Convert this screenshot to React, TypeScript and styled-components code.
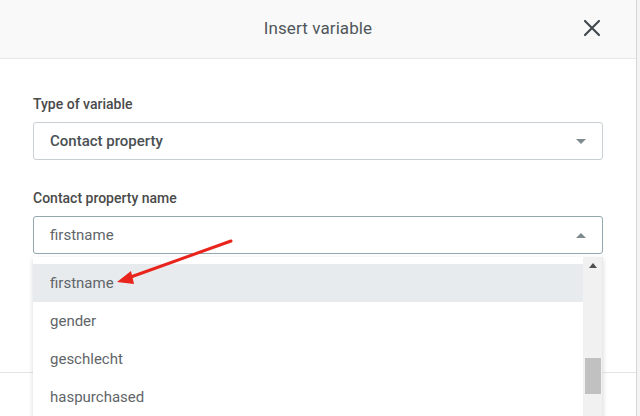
import React from "react";
import styled, { createGlobalStyle } from "styled-components";

const Global = createGlobalStyle`
  html, body { margin: 0; padding: 0; background: #fff; }
  body { font-family: Roboto, "Noto Sans", sans-serif; overflow: hidden; }
  * { box-sizing: border-box; }
`;

const Page = styled.div`
  position: relative;
  width: 640px;
  height: 416px;
  overflow: hidden;
  background: #f4f4f4;
`;

const Modal = styled.div`
  width: 637px;
  height: 416px;
  background: #fff;
  border-right: 1px solid #d6d6d6;
  display: flex;
  flex-direction: column;
`;

const Header = styled.div`
  height: 59px;
  flex: none;
  background: #f9f9f9;
  border-bottom: 1px solid #e7e7e7;
  display: flex;
  align-items: center;
  justify-content: center;
  position: relative;
  padding-bottom: 2px;
`;

const Title = styled.div`
  font-size: 17px;
  color: #50575b;
  letter-spacing: 0.1px;
`;

const Close = styled.button`
  position: absolute;
  right: 35px;
  top: 19px;
  width: 18px;
  height: 18px;
  padding: 0;
  border: 0;
  background: none;
  display: flex;
`;

const Body = styled.div`
  padding: 35px 33px 0 33px;
  display: flex;
  flex-direction: column;
  height: 313px;
  flex: none;
`;

const Label = styled.div<{ $top?: number }>`
  font-size: 14px;
  font-weight: 500;
  color: #4a4a4a;
  line-height: 20px;
  margin-top: ${(p) => p.$top ?? 0}px;
  margin-bottom: 8px;
`;

const Select = styled.div<{ $open?: boolean }>`
  width: 570px;
  height: 38px;
  border: 1px solid ${(p) => (p.$open ? "#93a7ae" : "#c8d0d4")};
  border-radius: 3px;
  display: flex;
  align-items: center;
  padding: 0 16px;
  justify-content: space-between;
`;

const Value = styled.span<{ $bold?: boolean }>`
  font-size: 15px;
  font-weight: ${(p) => (p.$bold ? 500 : 400)};
  color: ${(p) => (p.$bold ? "#4a5054" : "#5f6569")};
`;

const Caret = styled.span<{ $up?: boolean }>`
  width: 0;
  height: 0;
  border-left: 5px solid transparent;
  border-right: 5px solid transparent;
  ${(p) =>
    p.$up
      ? "border-bottom: 5px solid #7d8a90;"
      : "border-top: 5px solid #7d8a90;"}
`;

const Footer = styled.div`
  flex: 1;
  border-top: 1px solid #e4e4e4;
  background: #fff;
`;

const Dropdown = styled.div`
  position: absolute;
  left: 33px;
  top: 257px;
  width: 570px;
  height: 180px;
  background: #fff;
  box-shadow: 0 2px 5px rgba(0, 0, 0, 0.16);
  display: flex;
`;

const List = styled.div`
  flex: 1;
  padding-top: 7px;
`;

const Item = styled.div<{ $active?: boolean }>`
  height: 38px;
  display: flex;
  align-items: center;
  padding-left: 17px;
  font-size: 15px;
  color: #5f6569;
  background: ${(p) => (p.$active ? "#e7ebee" : "#fff")};
`;

const Track = styled.div`
  width: 20px;
  flex: none;
  background: #f1f1f1;
  position: relative;
  display: flex;
  flex-direction: column;
  align-items: center;
  padding-top: 6px;
  border-right: 1px solid #e9e9e9;
`;

const TrackArrow = styled.span`
  width: 0;
  height: 0;
  border-left: 4px solid transparent;
  border-right: 4px solid transparent;
  border-bottom: 5px solid #505050;
`;

const Thumb = styled.div`
  position: absolute;
  left: 2px;
  top: 101px;
  width: 16px;
  height: 36px;
  background: #c1c1c1;
`;

const Overlay = styled.svg`
  position: absolute;
  left: 0;
  top: 0;
  pointer-events: none;
`;

export default function App() {
  return (
    <Page>
      <Global />
      <Modal>
        <Header>
          <Title>Insert variable</Title>
          <Close aria-label="Close">
            <svg width="18" height="18" viewBox="0 0 18 18">
              <path
                d="M2 2 L16 16 M16 2 L2 16"
                stroke="#444b50"
                strokeWidth="2.2"
                strokeLinecap="round"
              />
            </svg>
          </Close>
        </Header>
        <Body>
          <Label>Type of variable</Label>
          <Select>
            <Value $bold>Contact property</Value>
            <Caret />
          </Select>
          <Label $top={28}>Contact property name</Label>
          <Select $open>
            <Value>firstname</Value>
            <Caret $up />
          </Select>
        </Body>
        <Footer />
      </Modal>
      <Dropdown>
        <List>
          <Item $active>firstname</Item>
          <Item>gender</Item>
          <Item>geschlecht</Item>
          <Item>haspurchased</Item>
        </List>
        <Track>
          <TrackArrow />
          <Thumb />
        </Track>
      </Dropdown>
      <Overlay width="640" height="416" viewBox="0 0 640 416">
        <line x1="231" y1="241" x2="128" y2="278" stroke="#e8241c" strokeWidth="3" strokeLinecap="round" />
        <polygon points="117,282 131,271 134,284" fill="#e8241c" />
      </Overlay>
    </Page>
  );
}
